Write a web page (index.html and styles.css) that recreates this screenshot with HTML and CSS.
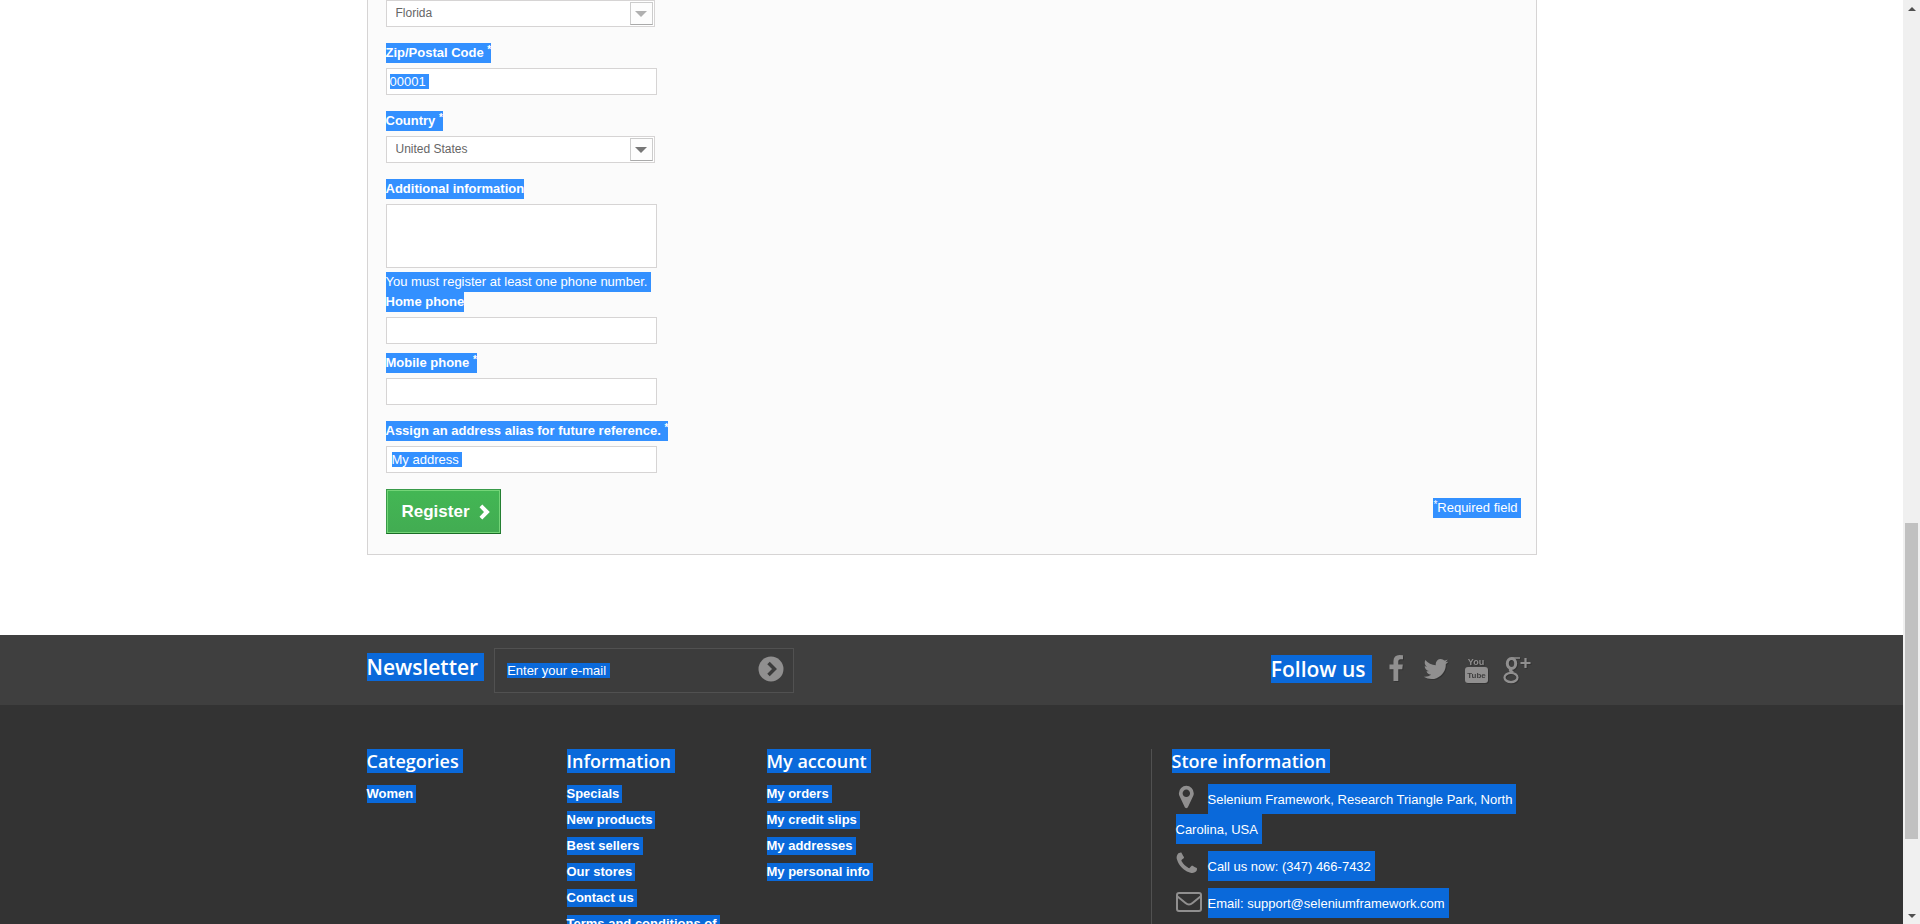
FILE: index.html
```html
<!DOCTYPE html>
<html lang="en">
<head>
<meta charset="utf-8">
<title>Create an account</title>
<link rel="stylesheet" href="styles.css">
</head>
<body>
<div class="viewport">
  <div class="page">
    <main class="container">
      <form class="card">
        <div class="select field">
          <select aria-label="State" class="select-box"><option>Florida</option></select>
          <span class="select-arrow is-muted"></span>
        </div>
        <div class="field">
          <label class="label mark" for="zip">Zip/Postal Code <sup>*</sup></label>
          <input class="input zip" id="zip" type="text" value="00001">
        </div>
        <div class="field">
          <label class="label mark" for="country">Country <sup>*</sup></label>
          <div class="select">
            <select class="select-box" id="country"><option>United States</option></select>
            <span class="select-arrow"></span>
          </div>
        </div>
        <div class="field is-tight">
          <label class="label mark" for="other">Additional information</label>
          <textarea class="input area" id="other"></textarea>
        </div>
        <p class="note mark">You must register at least one phone number.</p>
        <div class="field is-close">
          <label class="label mark" for="home">Home phone</label>
          <input class="input" id="home" type="tel">
        </div>
        <div class="field">
          <label class="label mark" for="mobile">Mobile phone <sup>*</sup></label>
          <input class="input" id="mobile" type="tel">
        </div>
        <div class="field">
          <label class="label mark" for="alias">Assign an address alias for future reference. <sup>*</sup></label>
          <input class="input alias" id="alias" type="text" value="My address">
        </div>
        <div class="submit">
          <button class="register" type="submit">Register
            <svg width="11" height="16" viewBox="0 0 11 16"><path d="M.5 3.300 3.300.5 10.800 8l-7.500 7.500L.5 12.700 5 8z" fill="#fff"/></svg>
          </button>
          <p class="required mark"><sup>*</sup>Required field</p>
        </div>
      </form>
    </main>
    <footer>
      <div class="bar">
        <div class="container bar-row">
          <label class="bar-title news-title mark-dark" for="news">Newsletter</label>
          <form class="news">
            <input class="news-input" id="news" type="text" value="Enter your e-mail">
            <button class="news-go" type="submit" aria-label="Subscribe">
              <svg width="26" height="26" viewBox="0 0 26 26"><circle cx="13" cy="13" r="12.500" fill="#908f8f"/><path d="M10.500 7l6 6-6 6" fill="none" stroke="#3c3c3c" stroke-width="3.500"/></svg>
            </button>
          </form>
          <div class="social">
            <h4 class="bar-title mark-dark">Follow us</h4>
            <nav class="social-links">
              <a href="#" aria-label="Facebook"><svg width="28" height="28" viewBox="0 0 1792 1792"><path d="M1343 12v264h-157q-86 0-116 36t-30 108v189h293l-39 296h-254v759h-306v-759h-255v-296h255v-218q0-186 104-288.500t277-102.500q147 0 228 12z"/></svg></a>
              <a href="#" aria-label="Twitter"><svg width="28" height="28" viewBox="0 0 1792 1792"><path d="M1684 408q-67 98-162 167 1 14 1 42 0 130-38 259.500t-115.500 248.500-184.500 210.500-258 146-323 54.500q-271 0-496-145 35 4 78 4 225 0 401-138-105-2-188-64.500t-114-159.500q33 5 61 5 43 0 85-11-112-23-185.500-111.500t-73.500-205.500v-4q68 38 146 41-66-44-105-115t-39-154q0-88 44-163 121 149 294.500 238.500t371.500 99.500q-8-38-8-74 0-134 94.500-228.500t228.500-94.500q140 0 236 102 109-21 205-78-37 115-142 178 93-10 186-50z"/></svg></a>
              <a href="#" aria-label="YouTube"><svg width="28" height="28" viewBox="0 0 28 28"><text x="14" y="10" text-anchor="middle" class="yt">You</text><rect x="3" y="12" width="23" height="16" rx="3"/><text x="14.500" y="23" text-anchor="middle" class="yt yt-cut">Tube</text></svg></a>
              <a href="#" aria-label="Google Plus"><svg width="28" height="28" viewBox="0 0 28 28"><g fill="none" stroke="#908f8f"><ellipse cx="9.500" cy="8.500" rx="4.200" ry="5" stroke-width="3"/><path d="M9.500 3H18" stroke-width="1.500"/><path d="M9 13.500c-1.500 2 0 3 2 4.200" stroke-width="3"/><ellipse cx="9" cy="22.500" rx="6.500" ry="4.600" stroke-width="2.200"/><path d="M23.500 3v10M18.500 8h10" stroke-width="2.200"/></g></svg></a>
            </nav>
          </div>
        </div>
      </div>
      <div class="container columns">
        <section>
          <h4 class="title mark-dark">Categories</h4>
          <ul class="links"><li><a class="mark-dark" href="#">Women</a></li></ul>
        </section>
        <section>
          <h4 class="title mark-dark">Information</h4>
          <ul class="links">
            <li><a class="mark-dark" href="#">Specials</a></li>
            <li><a class="mark-dark" href="#">New products</a></li>
            <li><a class="mark-dark" href="#">Best sellers</a></li>
            <li><a class="mark-dark" href="#">Our stores</a></li>
            <li><a class="mark-dark" href="#">Contact us</a></li>
            <li><a class="mark-dark" href="#">Terms and conditions of</a></li>
          </ul>
        </section>
        <section>
          <h4 class="title mark-dark">My account</h4>
          <ul class="links">
            <li><a class="mark-dark" href="#">My orders</a></li>
            <li><a class="mark-dark" href="#">My credit slips</a></li>
            <li><a class="mark-dark" href="#">My addresses</a></li>
            <li><a class="mark-dark" href="#">My personal info</a></li>
          </ul>
        </section>
        <section class="store">
          <h4 class="title mark-dark">Store information</h4>
          <ul class="contact">
            <li><svg class="icon" width="26" height="26" viewBox="184 70 1792 1792"><path d="M1152 640q0-106-75-181t-181-75-181 75-75 181 75 181 181 75 181-75 75-181zm256 0q0 109-33 179l-364 774q-16 33-47.500 52t-67.500 19-67.500-19-46.500-52l-365-774q-33-70-33-179 0-212 150-362t362-150 362 150 150 362z"/></svg><span class="mark-dark line">Selenium Framework, Research Triangle Park, North Carolina, USA</span></li>
            <li><svg class="icon" width="26" height="26" viewBox="150 90 1792 1792"><path d="M1600 1240q0 27-10 70.500t-21 68.500q-21 50-122 106-94 51-186 51-27 0-53-3.500t-57.500-12.500-47-14.500-55.500-20.500-49-18q-98-35-175-83-127-79-264-216t-216-264q-48-77-83-175-3-9-18-49t-20.500-55.500-14.500-47-12.500-57.500-3.500-53q0-92 51-186 56-101 106-122 25-11 68.500-21t70.500-10q14 0 21 3 18 6 53 76 11 19 30 54t35 63.500 31 53.500q3 4 17.500 25t21.500 35.500 7 28.500q0 20-28.500 50t-62 55-62 53-28.500 46q0 9 5 22.500t8.500 20.500 14 24 11.500 19q76 137 174 235t235 174q2 1 19 11.500t24 14 20.500 8.500 22.500 5q18 0 46-28.500t53-62 55-62 50-28.500q14 0 28.500 7t35.500 21.500 25 17.500q25 15 53.500 31t63.500 35 54 30q70 35 76 53 3 7 3 21z"/></svg><span class="mark-dark line">Call us now: (347) 466-7432</span></li>
            <li><svg class="icon" width="26" height="26" viewBox="0 0 26 26"><g fill="none" stroke="#908f8f" stroke-width="2"><rect x="1" y="4" width="24" height="18" rx="2"/><path d="M1.500 7.500 9.500 14q3.500 3 7 0l8-6.500"/></g></svg><span class="mark-dark line">Email: <a href="#">support@seleniumframework.com</a></span></li>
          </ul>
        </section>
      </div>
    </footer>
  </div>
  <div class="scroll" aria-hidden="true">
    <span class="scroll-end up"></span>
    <span class="scroll-before"></span>
    <span class="scroll-thumb"></span>
    <span class="scroll-after"></span>
    <span class="scroll-end down"></span>
  </div>
</div>
</body>
</html>
```
FILE: styles.css
```css
* { box-sizing: border-box; }
body, h4, p, ul { margin: 0; padding: 0; }
ul { list-style: none; }
body, input, select, textarea, button { font-family: "Liberation Sans", Arial, sans-serif; font-size: 13px; }
body { line-height: 20px; color: #777; }
a { color: inherit; text-decoration: none; }
sup { font-size: 10px; line-height: 0; vertical-align: 4px; }

.viewport { display: grid; grid-template-columns: minmax(0, 1fr) 17px; height: 100vh; overflow: hidden; }
.page { display: flex; flex-direction: column; overflow: hidden; background: #fff; }
.container { width: 100%; max-width: 1170px; margin: 0 auto; }

.mark { background: #3390ff; color: #fff; }
.mark-dark { background: #0a69da; color: #fff; }

/* Address form */
.card { padding: 0 15px 20px 18px; margin-bottom: 80px; background: #fbfbfb; border: 1px solid #d6d4d4; border-top: 0; }
.field { margin-bottom: 16px; }
.field.is-tight { margin-bottom: 4px; }
.field.is-close { margin-bottom: 9px; }
.label { display: block; width: fit-content; margin-bottom: 5px; font-weight: bold; }
.input { display: block; width: 271px; height: 27px; padding: 0 5px; border: 1px solid #d6d4d4; border-radius: 0; background: #fff; color: #fff; outline: 0; }
.zip { padding: 0 3px; background: linear-gradient(#3390ff, #3390ff) 3px 5px / 39px 15px no-repeat #fff; }
.alias { background: linear-gradient(#3390ff, #3390ff) 5px 5px / 70px 15px no-repeat #fff; }
.area { height: 64px; resize: none; }
.note { width: fit-content; padding-right: 4px; }
.select { position: relative; width: 269px; height: 27px; }
.select-box { width: 100%; height: 100%; padding: 0 9px 2px; appearance: none; border: 1px solid #d6d4d4; border-radius: 0; background: #fff; color: #666; font-size: 12px; }
.select-arrow { position: absolute; top: 2px; right: 2px; display: grid; place-items: center; width: 23px; height: 23px; border: 1px solid #ccc; border-bottom-color: #aaa; background: #fdfdfd; color: #777; pointer-events: none; }
.select-arrow::after { content: ""; border: 6px solid transparent; border-top-color: currentColor; border-bottom: 0; }
.is-muted { color: #b0b0b0; }
.submit { display: flex; justify-content: space-between; align-items: flex-start; }
.register { display: flex; align-items: center; gap: 9px; height: 45px; padding: 0 10px 0 15px; border: 1px solid; border-color: #399a49 #247f32 #1a6d27 #399a49; background: linear-gradient(#43b754, #42ac52); box-shadow: inset 0 0 0 1px #74d578; color: #fff; font-size: 17px; font-weight: bold; }
.required { margin-top: 9px; padding-right: 3px; }

/* Newsletter bar */
.bar { background: #3f3f3f; }
.bar-row { display: flex; align-items: flex-start; padding: 13px 0 12px; }
.bar-title { padding-right: 6px; font: 600 21px/28px "Open Sans", sans-serif; }
.news-title { margin-top: 5px; }
.news { position: relative; width: 300px; margin: 0 auto 0 10px; }
.news-input { display: block; width: 100%; height: 45px; padding: 0 50px 0 12px; border: 1px solid #515151; outline: 0; background: linear-gradient(#0a69da, #0a69da) 12px 14px / 103px 15px no-repeat #3c3c3c; color: #fff; }
.news-go { position: absolute; top: 8px; right: 10px; display: block; padding: 0; border: 0; background: none; }
.news-go svg { display: block; }
.social { display: flex; gap: 10px; margin-top: 7px; padding-right: 7px; fill: #908f8f; }
.social-links { display: flex; gap: 12px; }
.social svg { display: block; overflow: visible; filter: drop-shadow(1px 1px 0 #333); }
.yt { font: bold 9px "Liberation Sans Narrow", "Liberation Sans", sans-serif; }
.yt-cut { font-size: 8px; fill: #3f3f3f; }

/* Footer columns */
footer { flex: 1; background: #333; }
.columns { display: grid; grid-template-columns: 200px 200px minmax(0, 1fr) 386px; padding-top: 44px; }
.title { width: fit-content; margin-bottom: 12px; padding-right: 4px; font: 600 18px/24px "Open Sans", sans-serif; }
.links { display: grid; gap: 8px; font-weight: bold; line-height: 18px; }
.links a { display: block; width: fit-content; padding-right: 3px; }
.store { height: 200px; padding-left: 20px; border-left: 1px solid #515151; }
.contact { display: grid; gap: 7px; padding-left: 4px; line-height: 30px; }
.icon { float: left; margin-right: 6px; fill: #908f8f; }
.line { padding: 8px 4px 7px 0; box-decoration-break: clone; -webkit-box-decoration-break: clone; }

/* Scroll bar */
.scroll { display: flex; flex-direction: column; background: #f0f0f0; }
.scroll-end { display: grid; place-items: center; height: 17px; color: #505050; }
.scroll-end::after { content: ""; border: 4px solid transparent; }
.up::after { border-top: 0; border-bottom-color: currentColor; }
.down::after { border-bottom: 0; border-top-color: currentColor; }
.scroll-before { flex: 506; }
.scroll-thumb { flex: 316; margin: 0 2px; background: #c1c1c1; }
.scroll-after { flex: 68; }
```
